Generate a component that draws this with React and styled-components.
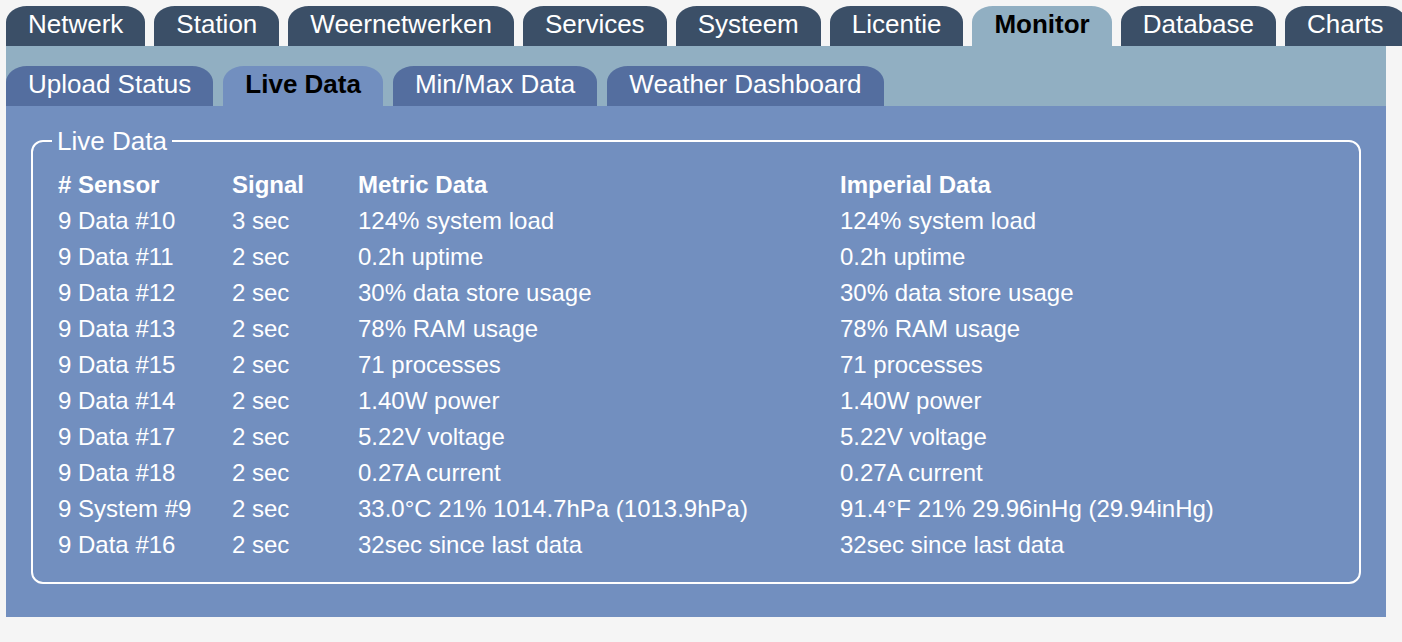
import React from 'react';
import styled, { createGlobalStyle } from 'styled-components';

const GlobalStyle = createGlobalStyle`
  body {
    margin: 0;
    background: #f5f5f5;
    font-family: "Liberation Sans", Arial, sans-serif;
  }
`;

const Page = styled.div`
  padding: 6px 16px 0 6px;
`;

const TopTabs = styled.div`
  display: flex;
  gap: 9px;
  height: 40px;
  white-space: nowrap;
`;

const Tab = styled.div`
  flex-shrink: 0;
  height: 40px;
  padding: 0 22px 4px;
  box-sizing: border-box;
  line-height: 36px;
  font-size: 26px;
  border-radius: 21px 21px 0 0 / 16px 16px 0 0;
  background: ${p => (p.$active ? '#91afc2' : '#3b4f67')};
  color: ${p => (p.$active ? '#000' : '#fff')};
  font-weight: ${p => (p.$active ? 700 : 400)};
`;

const SubBar = styled.div`
  display: flex;
  gap: 10px;
  height: 60px;
  padding-top: 20px;
  box-sizing: border-box;
  background: #91afc2;
  white-space: nowrap;
`;

const SubTab = styled(Tab)`
  padding: 0 22px 3px;
  background: ${p => (p.$active ? '#728fbf' : '#546e9f')};
`;

const Panel = styled.div`
  background: #728fbf;
  padding: 20px 25px 33px;
`;

const Box = styled.fieldset`
  margin: 0;
  border: 2px solid #fff;
  border-radius: 12px;
  padding: 11px 24px 19px 25px;
  color: #fff;
`;

const Legend = styled.legend`
  margin-left: -6px;
  padding: 0 5px;
  font-size: 26px;
  line-height: 30px;
`;

const Grid = styled.div`
  display: grid;
  grid-template-columns: 174px 126px 482px 1fr;
  font-size: 24px;
  line-height: 36px;
`;

const Head = styled.div`
  font-weight: 700;
  white-space: nowrap;
`;

const Cell = styled.div`
  white-space: nowrap;
`;

const topTabs = ['Netwerk', 'Station', 'Weernetwerken', 'Services', 'Systeem', 'Licentie', 'Monitor', 'Database', 'Charts'];
const subTabs = ['Upload Status', 'Live Data', 'Min/Max Data', 'Weather Dashboard'];

const rows = [
  ['9 Data #10', '3 sec', '124% system load', '124% system load'],
  ['9 Data #11', '2 sec', '0.2h uptime', '0.2h uptime'],
  ['9 Data #12', '2 sec', '30% data store usage', '30% data store usage'],
  ['9 Data #13', '2 sec', '78% RAM usage', '78% RAM usage'],
  ['9 Data #15', '2 sec', '71 processes', '71 processes'],
  ['9 Data #14', '2 sec', '1.40W power', '1.40W power'],
  ['9 Data #17', '2 sec', '5.22V voltage', '5.22V voltage'],
  ['9 Data #18', '2 sec', '0.27A current', '0.27A current'],
  ['9 System #9', '2 sec', '33.0°C 21% 1014.7hPa (1013.9hPa)', '91.4°F 21% 29.96inHg (29.94inHg)'],
  ['9 Data #16', '2 sec', '32sec since last data', '32sec since last data'],
];

export default function App() {
  return (
    <>
      <GlobalStyle />
      <Page>
        <TopTabs>
          {topTabs.map(t => (
            <Tab key={t} $active={t === 'Monitor'}>{t}</Tab>
          ))}
        </TopTabs>
        <SubBar>
          {subTabs.map(t => (
            <SubTab key={t} $active={t === 'Live Data'}>{t}</SubTab>
          ))}
        </SubBar>
        <Panel>
          <Box>
            <Legend>Live Data</Legend>
            <Grid>
              <Head># Sensor</Head>
              <Head>Signal</Head>
              <Head>Metric Data</Head>
              <Head>Imperial Data</Head>
              {rows.map(r => r.map((c, i) => <Cell key={r[0] + i}>{c}</Cell>))}
            </Grid>
          </Box>
        </Panel>
      </Page>
    </>
  );
}
